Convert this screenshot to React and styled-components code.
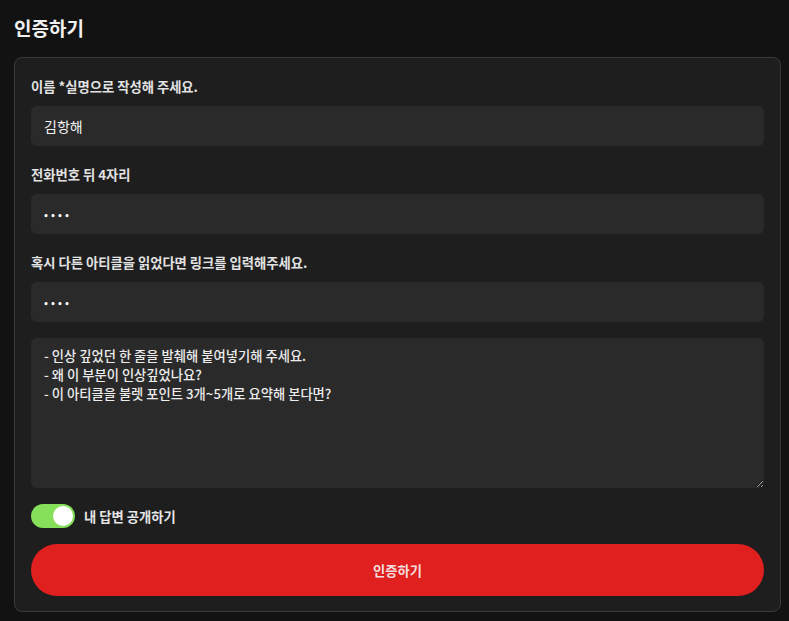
import React, { useState } from 'react'
import styled, { createGlobalStyle } from 'styled-components'

const GlobalStyle = createGlobalStyle`
  body {
    margin: 0;
    background: #121212;
    font-family: "Noto Sans CJK KR", "Noto Sans", sans-serif;
    color: #e6e6e6;
  }
`;

const Page = styled.div`
  padding: 14px 8px 0 14px;
`;

const Title = styled.h1`
  margin: 0 0 15px;
  font-size: 19px;
  line-height: 28px;
  font-weight: 700;
  color: #f0f0f0;
`;

const Card = styled.form`
  background: #1e1e1e;
  border: 1px solid #3a3a3a;
  border-radius: 8px;
  padding: 18px 16px 15px;
  display: flex;
  flex-direction: column;
`;

const Label = styled.label`
  font-size: 13.3px;
  line-height: 22px;
  font-weight: 700;
  color: #e2e2e2;
  margin-bottom: 8px;
`;

const Input = styled.input`
  box-sizing: border-box;
  height: 40px;
  border: none;
  border-radius: 6px;
  background: #2a2a2a;
  color: #f4f4f4;
  font-family: inherit;
  font-size: ${p => p.type === 'password' ? '10.5px' : '14px'};
  font-weight: ${p => p.type === 'password' ? 700 : 400};
  padding: 0 13px;
  outline: none;
  margin-bottom: ${p => p.$last ? '16px' : '18px'};
  letter-spacing: ${p => p.type === 'password' ? '3px' : 'normal'};
`;

const TextArea = styled.textarea`
  box-sizing: border-box;
  height: 150px;
  border: none;
  border-radius: 6px;
  background: #2a2a2a;
  color: #ececec;
  font-family: inherit;
  font-size: 13.3px;
  font-weight: 500;
  line-height: 19px;
  padding: 8px 13px;
  outline: none;
  resize: vertical;
  margin-bottom: 16px;
`;

const ToggleRow = styled.div`
  display: flex;
  align-items: center;
  gap: 9px;
  margin-bottom: 16px;
`;

const Switch = styled.button`
  position: relative;
  width: 44px;
  height: 24px;
  border: none;
  border-radius: 12px;
  background: ${p => p.$on ? '#86e05a' : '#555'};
  padding: 0;
  cursor: pointer;

  &::after {
    content: '';
    position: absolute;
    top: 2px;
    left: ${p => p.$on ? '22px' : '2px'};
    width: 20px;
    height: 20px;
    border-radius: 50%;
    background: #ffffff;
  }
`;

const ToggleText = styled.span`
  font-size: 13.3px;
  font-weight: 700;
  color: #e6e6e6;
`;

const Submit = styled.button`
  height: 52px;
  border: none;
  border-radius: 26px;
  background: #e01f1f;
  color: #f2dede;
  font-family: inherit;
  font-size: 13.3px;
  font-weight: 700;
  cursor: pointer;
`;

const App = () => {
  const [open, setOpen] = useState(true)
  return (
    <Page>
      <GlobalStyle />
      <Title>인증하기</Title>
      <Card onSubmit={e => e.preventDefault()}>
        <Label>이름 *실명으로 작성해 주세요.</Label>
        <Input defaultValue="김항해" />
        <Label>전화번호 뒤 4자리</Label>
        <Input type="password" defaultValue="1234" />
        <Label>혹시 다른 아티클을 읽었다면 링크를 입력해주세요.</Label>
        <Input type="password" defaultValue="1234" $last />
        <TextArea defaultValue={'- 인상 깊었던 한 줄을 발췌해 붙여넣기해 주세요.\n- 왜 이 부분이 인상깊었나요?\n- 이 아티클을 불렛 포인트 3개~5개로 요약해 본다면?'} />
        <ToggleRow>
          <Switch type="button" $on={open} onClick={() => setOpen(!open)} />
          <ToggleText>내 답변 공개하기</ToggleText>
        </ToggleRow>
        <Submit type="submit">인증하기</Submit>
      </Card>
    </Page>
  )
}

export default App
